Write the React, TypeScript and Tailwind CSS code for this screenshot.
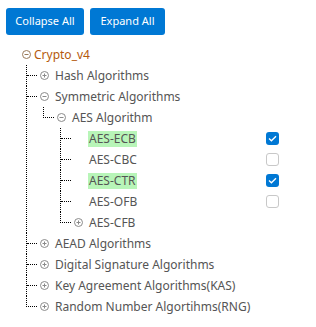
import { useState } from "react";

type TreeNode = {
  label: string;
  open?: boolean;
  leaf?: boolean;
  checked?: boolean;
  children?: TreeNode[];
};

const tree: TreeNode = {
  label: "Crypto_v4",
  open: true,
  children: [
    { label: "Hash Algorithms" },
    {
      label: "Symmetric Algorithms",
      open: true,
      children: [
        {
          label: "AES Algorithm",
          open: true,
          children: [
            { label: "AES-ECB", leaf: true, checked: true },
            { label: "AES-CBC", leaf: true, checked: false },
            { label: "AES-CTR", leaf: true, checked: true },
            { label: "AES-OFB", leaf: true, checked: false },
            { label: "AES-CFB" },
          ],
        },
      ],
    },
    { label: "AEAD Algorithms" },
    { label: "Digital Signature Algorithms" },
    { label: "Key Agreement Algorithms(KAS)" },
    { label: "Random Number Algortihms(RNG)" },
  ],
};

function ToggleIcon({ open, color }: { open: boolean; color: string }) {
  return (
    <svg width="9" height="9" viewBox="0 0 9 9" className="shrink-0">
      <circle cx="4.5" cy="4.5" r="4" fill="none" stroke={color} strokeWidth="1" />
      <line x1="2.5" y1="4.5" x2="6.5" y2="4.5" stroke={color} strokeWidth="1" />
      {!open && <line x1="4.5" y1="2.5" x2="4.5" y2="6.5" stroke={color} strokeWidth="1" />}
    </svg>
  );
}

function Checkbox({ checked }: { checked: boolean }) {
  if (checked) {
    return (
      <span className="ml-auto flex h-[13px] w-[13px] shrink-0 items-center justify-center rounded-[3px] bg-[#0078d4]">
        <svg width="9" height="7" viewBox="0 0 9 7">
          <path d="M1 3.6 L3.4 5.8 L8 1.2" fill="none" stroke="white" strokeWidth="1.3" />
        </svg>
      </span>
    );
  }
  return <span className="ml-auto h-[13px] w-[13px] shrink-0 rounded-[3px] border border-[#c8c8c8] bg-white" />;
}

// one child with its dotted connector; non-last children carry the vertical line down
function Branch({ node, last }: { node: TreeNode; last: boolean }) {
  const open = !!node.open;
  return (
    <div className="flex">
      {last ? (
        <div className="h-[11px] w-[11px] shrink-0 border-b border-l border-dotted border-black" />
      ) : (
        <div className="w-[11px] shrink-0 border-l border-dotted border-black">
          <div className="h-[11px] border-b border-dotted border-black" />
        </div>
      )}
      <div className="flex-1">
        <div className="flex h-[21px] items-center pl-[3px]">
          {node.leaf ? <span className="w-[9px]" /> : <ToggleIcon open={open} color="#8a8a8a" />}
          {node.checked ? (
            <span className="ml-[5px] bg-[#b8f5b8] px-px leading-[16px] text-[#555]">{node.label}</span>
          ) : (
            <span className="ml-[6px] leading-[16px] text-[#555]">{node.label}</span>
          )}
          {node.leaf && <Checkbox checked={!!node.checked} />}
        </div>
        {open && node.children && (
          <div className="ml-[6px]">
            {node.children.map((c, i) => (
              <Branch key={c.label} node={c} last={i === node.children!.length - 1} />
            ))}
          </div>
        )}
      </div>
    </div>
  );
}

export default function App() {
  const [, setOpenAll] = useState(true);
  return (
    <div className="h-[327px] w-[316px] bg-white font-['Noto_Sans','Open_Sans',sans-serif] text-[12px]">
      <div className="flex gap-[6px] pl-[6px] pt-[8px]">
        <button
          className="h-[27px] w-[78px] rounded-[3px] bg-[#0078d4] text-[11px] text-white"
          onClick={() => setOpenAll(false)}
        >
          Collapse All
        </button>
        <button
          className="h-[27px] w-[75px] rounded-[3px] bg-[#0078d4] text-[11px] text-white"
          onClick={() => setOpenAll(true)}
        >
          Expand All
        </button>
      </div>
      <div className="ml-[22px] mt-[9px] w-[257px]">
        <div className="flex h-[21px] items-center">
          <ToggleIcon open color="#9a7a5a" />
          <span className="ml-[3px] text-[#b4590c]">{tree.label}</span>
        </div>
        <div className="ml-[4px]">
          {tree.children!.map((c, i) => (
            <Branch key={c.label} node={c} last={i === tree.children!.length - 1} />
          ))}
        </div>
      </div>
    </div>
  );
}
